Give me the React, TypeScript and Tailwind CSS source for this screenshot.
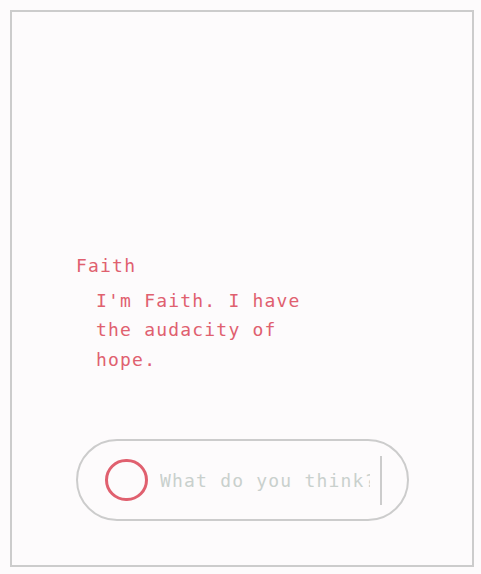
import React from "react";

export default function App() {
  return (
    <div className="w-[481px] h-[574px] bg-[#fdfbfc] pt-[10px] pl-[10px]">
      <div className="w-[464px] h-[557px] border-2 border-[#cccccc] flex flex-col justify-end pb-[44px] pl-[64px]" style={{ fontFamily: '"DejaVu Sans Mono", "Liberation Mono", monospace' }}>
        <div className="text-[#e0606f] text-[18px] leading-[24px] tracking-[1.2px]">Faith</div>
        <div className="text-[#e0606f] text-[18px] leading-[29.5px] tracking-[1.2px] pl-[20px] mt-[8px] w-[240px]">
          I'm Faith. I have the audacity of hope.
        </div>
        <div className="mt-[65px] w-[333px] h-[82px] rounded-full border-2 border-[#cccccc] flex items-center pl-[27px] pr-[25px]">
          <div className="w-[43px] h-[42px] rounded-full border-[3px] border-[#e0606f] shrink-0" />
          <div className="ml-[12px] flex-1 overflow-hidden whitespace-nowrap text-[18px] tracking-[1.2px] text-[#c9d0cd]">
            What do you think?
          </div>
          <div className="w-[2px] h-[49px] bg-[#cccccc] ml-[10px] shrink-0" />
        </div>
      </div>
    </div>
  );
}
